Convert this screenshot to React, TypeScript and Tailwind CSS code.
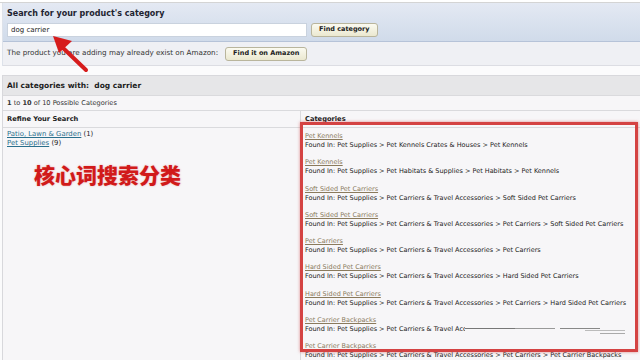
const categories = [
  { name: 'Pet Kennels', path: 'Pet Supplies > Pet Kennels Crates & Houses > Pet Kennels' },
  { name: 'Pet Kennels', path: 'Pet Supplies > Pet Habitats & Supplies > Pet Habitats > Pet Kennels' },
  { name: 'Soft Sided Pet Carriers', path: 'Pet Supplies > Pet Carriers & Travel Accessories > Soft Sided Pet Carriers' },
  { name: 'Soft Sided Pet Carriers', path: 'Pet Supplies > Pet Carriers & Travel Accessories > Pet Carriers > Soft Sided Pet Carriers' },
  { name: 'Pet Carriers', path: 'Pet Supplies > Pet Carriers & Travel Accessories > Pet Carriers' },
  { name: 'Hard Sided Pet Carriers', path: 'Pet Supplies > Pet Carriers & Travel Accessories > Hard Sided Pet Carriers' },
  { name: 'Hard Sided Pet Carriers', path: 'Pet Supplies > Pet Carriers & Travel Accessories > Pet Carriers > Hard Sided Pet Carriers' },
  { name: 'Pet Carrier Backpacks', path: 'Pet Supplies > Pet Carriers & Travel Accessories > Pet Carriers > Pet Carrier Backpacks' },
  { name: 'Pet Carrier Backpacks', path: 'Pet Supplies > Pet Carriers & Travel Accessories > Pet Carriers > Pet Carrier Backpacks' },
];

function Button({ label }: { label: string }) {
  return (
    <div className="h-[14px] px-[7px] flex items-center rounded-[3px] border border-[#b9b59c] bg-gradient-to-b from-[#fbfaf0] to-[#ebe8d0] text-[6.5px] font-bold text-[#222]">
      {label}
    </div>
  );
}

export default function App() {
  return (
    <div className="relative w-[640px] h-[360px] overflow-hidden bg-[#fbfbfc] font-['DejaVu_Sans',sans-serif] text-[#222]">
      <div className="h-[3px] border-b border-[#d4d4d4] bg-white" />

      {/* search panel */}
      <div className="ml-[2px] border-l border-[#dde2ea]">
        <div className="h-[39px] px-[4px] pt-[6px] bg-gradient-to-b from-[#e4e9f3] to-[#d0dbea] border-b border-[#b6c3d8]">
          <div className="text-[8px] font-bold leading-[10px] text-[#1e2430]">Search for your product's category</div>
          <div className="mt-[4px] flex items-center gap-[4px]">
            <div className="w-[300px] h-[14px] bg-white border border-[#c9d2de] px-[3px] flex items-center text-[7px]">
              dog carrier
            </div>
            <Button label="Find category" />
          </div>
        </div>
        <div className="h-[24px] px-[4px] flex items-center gap-[7px] bg-[#eff0f4] border-b border-[#dcdde3] text-[7.2px] text-[#333]">
          <span>The product you are adding may already exist on Amazon:</span>
          <Button label="Find it on Amazon" />
        </div>
      </div>

      <div className="h-[9px]" />

      {/* results */}
      <div className="ml-[2px] bg-[#f7f6f8] border-l border-t border-[#d8d8dc] h-[300px]">
        <div className="h-[20px] px-[4px] flex items-center bg-[#e6e6e8] border-b border-[#dadadd] text-[7.5px] font-bold text-[#1c1c1c]">
          All categories with:&nbsp;&nbsp;dog carrier
        </div>
        <div className="h-[15px] px-[4px] pt-[1px] flex items-center border-b border-[#dadadd] text-[6.6px] text-[#333]">
          <b>1</b>&nbsp;to&nbsp;<b>10</b>&nbsp;of 10 Possible Categories
        </div>
        <div className="flex">
          <div className="w-[298px] border-r border-[#dadadd]">
            <div className="h-[17px] px-[4px] pt-[1px] flex items-center border-b border-[#dadadd] text-[6.7px] font-bold">
              Refine Your Search
            </div>
            <div className="px-[4px] pt-[2px] text-[6.9px] leading-[9px]">
              <div><span className="text-[#2a6f8c] underline">Patio, Lawn &amp; Garden</span> (1)</div>
              <div><span className="text-[#2a6f8c] underline">Pet Supplies</span> (9)</div>
            </div>
            <div className="pl-[31px] pt-[14px] font-['Noto_Sans_CJK_SC',sans-serif] text-[21px] font-black leading-[24px] text-[#d11a1a] [text-shadow:0_0_2px_rgba(210,30,30,0.35)]">
              核心词搜索分类
            </div>
          </div>
          <div className="flex-1">
            <div className="h-[17px] px-[4px] pt-[1px] flex items-center border-b border-[#dadadd] text-[6.7px] font-bold">
              Categories
            </div>
            <div className="px-[4px] pt-[4px] text-[6.5px] leading-[9px]">
              {categories.map((c, i) => (
                <div key={i} className="mb-[8.3px]">
                  <div className="text-[#8a7a5c] underline">{c.name}</div>
                  <div className="text-[#222]">Found In: {c.path}</div>
                </div>
              ))}
            </div>
          </div>
        </div>
      </div>

      {/* annotation box */}
      <div className="absolute left-[300px] top-[122px] w-[338px] h-[230px] border-[3px] border-[#d44343] shadow-[0_0_3px_rgba(200,40,40,0.5)]" />

      {/* glitch on the last boxed line */}
      <div className="absolute left-[465px] top-[326px] w-[160px] h-[10px] bg-[#f7f6f8]">
        <div className="absolute left-0 top-[2px] w-[50px] h-[1px] bg-[#777]" />
        <div className="absolute left-[50px] top-[2px] w-[40px] h-[1px] bg-[#999]" />
        <div className="absolute left-[95px] top-[2px] w-[40px] h-[1px] bg-[#888]" />
        <div className="absolute left-[120px] top-[4px] w-[40px] h-[1px] bg-[#bbb]" />
        <div className="absolute left-[135px] top-[7px] w-[25px] h-[1px] bg-[#aaa]" />
      </div>

      {/* red arrow */}
      <svg className="absolute left-0 top-0" width="120" height="80" viewBox="0 0 120 80">
        <line x1="86" y1="70" x2="62" y2="47" stroke="#d61c1c" strokeWidth="4" strokeLinecap="round" />
        <path d="M53 36 L72 41 L59 53 Z" fill="#d61c1c" />
      </svg>
    </div>
  );
}
